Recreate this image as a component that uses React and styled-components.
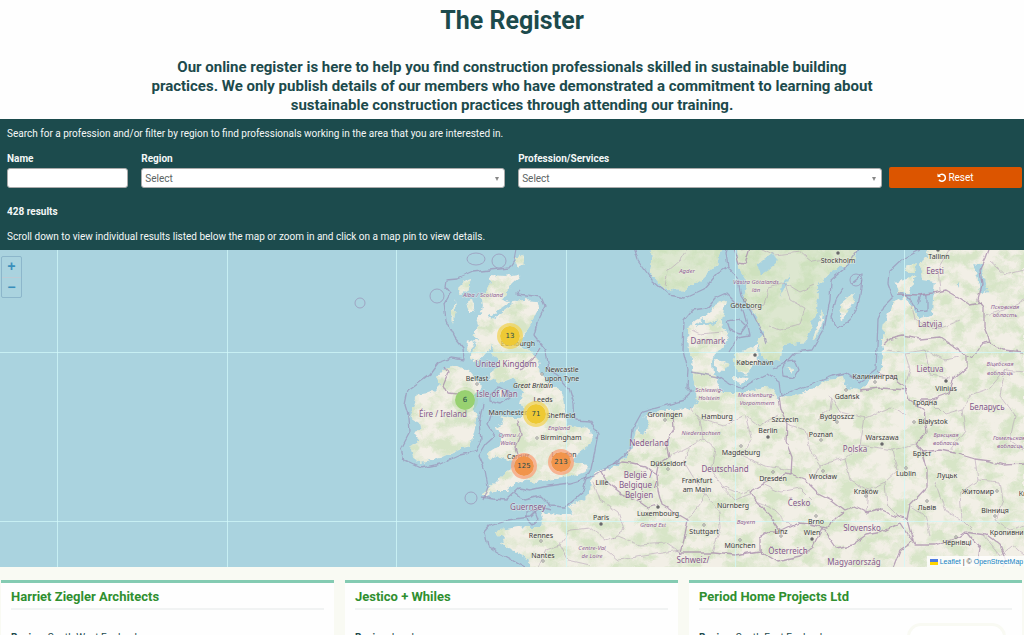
import React from "react";
import styled, { createGlobalStyle } from "styled-components";

const GlobalStyle = createGlobalStyle`
  * { box-sizing: border-box; }
  body {
    margin: 0;
    background: #f9faf3;
    color: #1c4a4c;
    font-family: Roboto, "Liberation Sans", sans-serif;
    font-size: 10px;
    overflow-x: hidden;
  }
`;

const Intro = styled.header`
  background: #fefefe;
  padding: 6px 16px 4px;
  text-align: center;
`;

const PageTitle = styled.h1`
  margin: 0 0 22px;
  font-size: 25px;
  line-height: 30px;
  font-weight: 700;
`;

const Lead = styled.p`
  max-width: 728px;
  margin: 0 auto;
  font-size: 15px;
  line-height: 19px;
  font-weight: 700;
`;

const FilterPanel = styled.form`
  display: flex;
  flex-direction: column;
  gap: 12px;
  padding: 8px 2px 7px 7px;
  background: #1c4b4d;
  color: #f4f7f7;
`;

const Note = styled.p`
  margin: 0;
  line-height: 13px;
`;

const ResultCount = styled(Note)`
  margin-top: 5px;
  font-weight: 700;
`;

const FilterRow = styled.div`
  display: flex;
  align-items: flex-end;
  gap: 7px;
`;

const Fields = styled.div`
  display: grid;
  grid-template-columns: 1fr 3fr 3fr;
  gap: 13px;
  flex: 1;
`;

const Field = styled.label`
  display: flex;
  flex-direction: column;
  gap: 3px;
  min-width: 0;
  line-height: 13px;
  font-weight: 700;
`;

const TextBox = styled.input`
  width: 100%;
  height: 20px;
  padding: 0 4px;
  border: 1px solid #aaa;
  border-radius: 3px;
  background: #fff;
  font: inherit;
  font-weight: 400;
`;

const SelectWrap = styled.span`
  position: relative;
  display: block;

  &::after {
    content: "";
    position: absolute;
    right: 6px;
    top: 9px;
    border: 2px solid transparent;
    border-top: 4px solid #888;
    border-bottom: 0;
    pointer-events: none;
  }
`;

const SelectBox = styled.select`
  display: block;
  width: 100%;
  height: 20px;
  padding: 0 3px;
  appearance: none;
  border: 1px solid #aaa;
  border-radius: 3px;
  background: #fff;
  color: #5c6464;
  font: inherit;
  font-weight: 400;
`;

const ResetButton = styled.button`
  display: flex;
  align-items: center;
  justify-content: center;
  gap: 2px;
  width: 133px;
  height: 21px;
  padding: 0;
  border: 0;
  border-radius: 2px;
  background: #dc5500;
  color: #fff;
  font: inherit;
`;

const MapArea = styled.section`
  position: relative;
  aspect-ratio: 1024 / 317;
  overflow: hidden;
  background: #aad3df;
`;

const MapDrawing = styled.svg`
  display: block;
  width: 100%;
  height: 100%;
  font-family: "Noto Sans", sans-serif;
`;

const ZoomControl = styled.div`
  position: absolute;
  top: 6px;
  left: 1px;
  border: 1px solid #8cb6cb;
  border-radius: 2px;
`;

const ZoomButton = styled.button`
  display: block;
  width: 19px;
  height: 20px;
  padding: 0;
  border: 0;
  background: transparent;
  color: #398fbb;
  font: 700 14px/18px "Liberation Mono", monospace;

  & + & {
    border-top: 1px solid #bccbd5;
  }
`;

const clusterTones = {
  small: ["rgba(150, 212, 110, 0.2)", "#98d171"],
  medium: ["rgba(241, 211, 87, 0.75)", "#eec934"],
  large: ["rgba(250, 160, 120, 0.75)", "#f1944b"],
};

const Cluster = styled.button`
  position: absolute;
  left: ${(p) => (p.$x / 1024) * 100}%;
  top: ${(p) => ((p.$y - 250) / 317) * 100}%;
  width: 26px;
  height: 26px;
  padding: 0;
  transform: translate(-50%, -50%);
  border: 3px solid ${(p) => clusterTones[p.$tone][0]};
  border-radius: 50%;
  background: ${(p) => clusterTones[p.$tone][1]};
  background-clip: padding-box;
  color: #1c4a4c;
  font: 7px/20px "DejaVu Sans", sans-serif;
`;

const Attribution = styled.div`
  position: absolute;
  left: 90.5%;
  bottom: 0;
  display: flex;
  align-items: center;
  gap: 2px;
  padding: 0 3px;
  background: rgba(255, 255, 255, 0.8);
  color: #333;
  font: 7px/11px "Liberation Sans", sans-serif;
  white-space: nowrap;
`;

const MapLink = styled.a`
  color: #1484c4;
  text-decoration: none;
`;

const Results = styled.main`
  display: grid;
  grid-template-columns: repeat(3, 1fr);
  gap: 11px;
  padding: 13px 2px 0 1px;
`;

const Card = styled.article`
  padding: 6px 10px 10px;
  border-top: 3px solid #84cbb2;
  background: #fefefe;
`;

const CardTitle = styled.h2`
  margin: 0 0 20px;
  padding-bottom: 3px;
  border-bottom: 2px solid #f1f3f3;
  color: #2f8f2f;
  font-size: 13px;
  line-height: 16px;
  font-weight: 700;
`;

const CardBody = styled.div`
  display: flex;
  justify-content: space-between;
  align-items: flex-start;
`;

const Detail = styled.p`
  margin: 1px 0 0;
  line-height: 14px;
`;

const LogoFrame = styled.div`
  width: 99px;
  height: 40px;
  margin: -7px 6px 0 0;
  border: 3px solid #f9faf3;
  border-radius: 14px;
  background: #fff;
`;

const graticuleX = [57, 227, 396, 566, 735, 904];
const graticuleY = [352, 521];

const coasts = [
  // Great Britain
  "490,275 505,276 518,274 520,277 513,283 508,292 502,300 507,302 523,300 537,301 539,305 535,317 528,328 523,337 518,342 507,343 522,347 532,352 538,360 540,372 547,382 557,388 563,395 565,405 564,417 567,425 577,427 590,428 593,437 587,448 577,455 572,462 588,465 587,471 577,475 563,478 547,480 537,482 523,480 513,485 507,490 497,490 485,497 481,495 493,485 503,475 510,468 520,467 523,462 510,460 500,457 490,458 487,453 500,445 505,435 495,430 503,422 500,416 510,418 522,418 523,410 520,403 523,392 513,378 500,383 490,378 488,373 497,368 497,358 492,355 493,345 487,352 478,362 470,360 473,348 478,338 472,335 480,325 477,317 483,308 482,298 487,288 492,283",
  "472,278 466,280 458,288 461,294 469,289",
  "466,303 472,300 475,310 470,313",
  "455,300 456,310 453,324 452,313",
  "517,258 522,254 524,262 518,268 515,262",
  "468,340 475,342 467,353",
  // Ireland
  "457,365 468,370 478,382 482,387 475,395 473,405 477,420 473,437 470,447 457,450 440,458 422,463 413,457 410,447 420,440 415,435 422,425 410,417 413,407 417,395 433,392 440,385 437,378 445,368",
  "499,393 503,388 505,392 501,397",
  // Continental Europe
  "500,530 517,527 527,528 542,528 543,520 540,512 550,513 563,515 573,512 567,507 583,500 590,493 591,480 597,472 610,468 617,466 627,457 633,443 637,427 643,417 663,410 677,410 692,408 698,402 697,392 693,378 692,368 693,358 689,352 688,328 697,320 710,313 715,305 725,300 723,315 720,328 730,333 727,342 717,352 712,362 713,373 717,382 722,392 737,392 750,392 763,387 773,388 777,398 790,397 807,392 827,380 843,378 847,388 860,390 870,380 879,377 882,368 883,355 882,338 885,322 892,303 905,297 913,307 920,318 932,315 933,298 935,282 922,280 920,265 927,255 933,244 1030,244 1030,575 532,575 528,558 517,552 500,545 505,538 495,533",
  "733,355 745,350 757,345 758,362 747,375 736,371",
  "714,360 728,362 725,372 717,371",
  "733,377 748,378 742,383 734,381",
  "787,366 793,369 791,373",
  // Norway and Sweden
  "650,244 652,260 650,273 663,287 680,291 700,282 717,265 722,244",
  "737,244 738,268 747,282 743,298 757,318 763,332 757,342 763,358 780,362 783,345 807,342 813,318 817,312 818,285 830,272 853,262 860,244",
  "840,305 855,292 853,300 842,322",
  "813,338 823,310 822,322 815,339",
  "895,283 918,275 908,293 898,293",
  "905,268 917,264 914,272 907,272",
];

const lakes = [
  "973,263 983,265 984,279 988,292 982,295 978,280",
  "757,265 773,252 777,262 768,270 760,275",
  "790,275 786,286 780,297 782,285",
  "638,421 645,416 648,425 643,434 639,431",
  "957,281 959,284 957,288",
];

const seaBorders = [
  "517,244 514,260 509,268 490,270 473,272 457,279 446,280 445,286 450,292 444,303 446,320 455,338 463,348 464,360 452,358 438,363 430,374 419,382 408,390 405,405 409,418 410,432 401,449 404,460 421,468 440,464 460,455 476,451 481,440 479,423 483,405",
  "520,290 516,294 526,295 541,297 545,306 538,320 534,335 546,350 549,370 560,378 569,388 574,404 575,420 590,421 598,434 594,455 591,469 586,478 583,492 566,507 551,506 541,496 525,500 515,493",
  "483,500 488,487 485,470 479,456 486,444 495,436 488,425 492,412",
  "481,497 493,499 506,500 519,488 530,490 548,486 570,483 591,477 602,470 613,465",
  "552,510 540,507 530,517 508,520 490,526 485,532 488,546 499,553 517,563 528,569",
  "613,465 630,450 632,430 642,412 663,406 684,400 692,392 687,387 688,370 683,350 684,320 692,310 707,308 715,298 726,293 734,301 745,313 750,335 738,337 729,352",
  "633,244 638,260 652,280 669,295 685,298 704,289 717,274 728,267 737,277 741,296 753,315 763,335 766,344",
  "728,267 726,253 729,244",
  "692,372 718,377 728,384 742,388 757,379 767,374 779,382 781,396 794,390 812,384 833,376 846,373 859,383 876,370 877,346 878,319 884,306 893,297 888,283 889,272 903,259 920,250",
  "860,247 844,269 831,280 830,300 824,329 812,350 795,352 785,363 773,369",
  "905,294 913,303 918,312 927,311 927,295 921,295 918,303",
  "850,284 862,274 861,288 858,306 848,323 837,328 831,318 836,300 843,289",
  "787,361 795,360 799,370 794,378 784,376 783,369 787,361",
  "727,321 739,319 746,326 741,333 730,330 727,321",
  "490,395 500,386 509,391 510,398 501,404 490,401 490,395",
  "527,512 535,511 538,519 532,524 527,519 527,512",
];

const landBorders = [
  "445,366 449,373 444,385 448,393 457,394 462,392 470,398",
  "520,370 535,356 540,348",
  "518,420 521,435 516,447 520,460",
  "613,465 622,462 631,463 645,466 657,474 658,490 662,505 674,512 688,520 685,535 680,553",
  "600,470 607,482 622,494 637,500 648,508 658,505",
  "673,412 674,430 666,443 669,457 658,465 656,475",
  "680,553 700,553 713,553 735,555 760,551 760,538 772,531 781,531 771,517 756,502 750,492 765,483 785,474 791,475 792,457 786,442 787,424 781,410 779,396",
  "791,474 804,479 818,493 832,500 845,510 855,506 867,512 879,509 890,514 907,520 910,505 927,487 927,470 921,450 916,444 927,432 924,410 909,400 905,386 893,377 877,372",
  "781,531 798,523 810,524 826,528 836,518 844,512",
  "760,551 778,562 800,557 812,548 822,528 836,548 852,545 866,535 882,532 901,523",
  "860,390 880,388 908,390",
  "884,345 890,339 903,336 920,339 940,337 952,345 966,355 973,358 983,343 990,342 984,327 984,307 978,300 982,285 980,270 986,258 991,244",
  "898,294 920,295 933,293 946,290 960,298 970,305 982,303",
  "990,342 1003,350 1024,352",
  "966,355 966,368 954,378 949,393 930,400 920,400",
  "921,452 940,450 955,453 975,459 990,461 1004,465 1024,464",
  "901,523 915,545 935,545 957,538 965,532 987,535 1000,545 1006,560 1003,570",
  "967,532 980,548 976,570",
  "907,520 913,541 900,550 892,570",
  "732,244 738,263 745,264 750,248",
];

const regionBorders = [
  "535,575 546,550 560,545 570,530 590,528 605,540 618,536 640,545 666,543 684,555",
  "593,480 600,500 618,512 624,530 613,538",
  "600,545 618,560 650,555 680,550",
  "560,545 568,560 590,565",
  "690,407 700,420 703,438 690,446 672,455",
  "703,438 716,450 712,470 722,486 740,494 750,490",
  "700,418 724,425 745,415 760,425 778,415",
  "745,415 752,440 740,455 765,466 792,470",
  "690,446 684,462 695,480 706,495 693,512 686,520",
  "706,495 719,512 720,528 712,553",
  "722,486 735,500 750,494",
  "692,330 700,334 722,332",
  "762,484 780,492 800,488 812,500",
  "756,502 775,510 790,526 800,523",
  "787,424 805,430 810,450 820,465 815,480",
  "830,395 840,412 865,418 890,408 907,415",
  "820,465 845,458 860,445 893,450 915,444",
  "865,418 860,445",
  "845,458 850,480 868,490 885,482 898,470 893,450",
  "868,490 866,512",
  "885,482 887,505 900,518",
  "818,420 830,410 832,396",
  "887,350 905,353 925,350 945,360 960,357",
  "905,353 910,370 905,386",
  "925,350 930,375 950,378",
  "930,400 945,415 962,410 970,395 990,388 1005,370 1024,372",
  "962,410 965,430 950,450",
  "1005,370 1000,395 1015,415 1010,440 1024,450",
  "985,315 1005,310 1024,300",
  "990,262 1005,275 1024,270",
  "975,459 978,480 960,493 962,520 972,530",
  "978,480 1000,482 1003,500 995,520 1010,530 1024,525",
  "935,482 945,510 960,520",
  "910,505 925,515 930,535",
  "750,310 764,306 768,288 785,283 800,292 815,285",
  "768,325 780,330 800,325 805,308 790,300 785,283",
  "740,250 760,248 775,255 800,252 812,262 840,258",
  "665,285 668,270 680,260 690,244",
  "910,297 915,320 935,330 960,320",
  "940,290 938,270 950,250",
  "984,535 1000,555 1012,545 1024,555",
];

const seaCircles = [
  [360, 303, 5],
  [437, 296, 7],
  [471, 498, 6],
  [856, 280, 6],
  [499, 261, 7],
];

const countries = [
  ["United Kingdom", 506, 367], ["Isle of Man", 497, 397], ["Éire / Ireland", 443, 417],
  ["Guernsey", 528, 510], ["Danmark", 708, 344], ["Eesti", 935, 274], ["Latvija", 930, 327],
  ["Lietuva", 930, 372], ["Беларусь", 987, 410], ["Nederland", 649, 446],
  ["België /", 638, 478], ["Belgique /", 638, 488], ["Belgien", 639, 498],
  ["Deutschland", 725, 472], ["Česko", 799, 506], ["Polska", 855, 452],
  ["Slovensko", 862, 531], ["Österreich", 788, 554], ["Magyarország", 854, 565],
  ["Schweiz/", 693, 563],
];

const regions = [
  ["Alba / Scotland", 483, 297], ["England", 559, 430], ["Cymru /", 509, 437],
  ["Wales", 508, 445], ["Agder", 687, 273], ["Västra Götalands", 756, 284],
  ["län", 756, 292], ["Schleswig-", 709, 392], ["Holstein", 709, 400],
  ["Mecklenburg-", 756, 397], ["Vorpommern", 757, 405], ["Niedersachsen", 701, 435],
  ["Grand Est", 653, 527], ["Bayern", 746, 524], ["Centre-Val", 592, 550],
  ["de Loire", 592, 558], ["Псковская", 1005, 309], ["область", 1005, 317],
  ["Віцебская", 1000, 366], ["вобласць", 1000, 375], ["Брэсцкая", 946, 437],
  ["вобласць", 946, 445], ["Гомельская", 1009, 440], ["вобласць", 1010, 448],
];

const cities = [
  ["Edinburgh", 518, 346], ["Newcastle", 562, 372], ["upon Tyne", 562, 381],
  ["Belfast", 477, 381], ["Leeds", 543, 402], ["Manchester", 508, 415],
  ["Sheffield", 561, 418], ["Birmingham", 561, 440], ["Cardiff", 518, 459],
  ["London", 564, 457], ["Rennes", 541, 538], ["Nantes", 543, 558], ["Paris", 601, 520],
  ["Lille", 602, 485], ["Göteborg", 746, 308], ["København", 755, 365],
  ["Stockholm", 838, 263], ["Tallinn", 939, 259], ["Groningen", 665, 417],
  ["Hamburg", 717, 419], ["Berlin", 768, 433], ["Szczecin", 785, 422],
  ["Magdeburg", 741, 455], ["Düsseldorf", 668, 466], ["Frankfurt", 697, 483],
  ["am Main", 697, 492], ["Luxembourg", 658, 516], ["Nürnberg", 733, 508],
  ["Stuttgart", 704, 534], ["München", 740, 548], ["Dresden", 773, 481],
  ["Linz", 781, 534], ["Wien", 812, 535], ["Brno", 816, 524], ["Wrocław", 823, 479],
  ["Poznań", 821, 437], ["Bydgoszcz", 837, 419], ["Warszawa", 882, 440],
  ["Gdańsk", 847, 399], ["Калининград", 875, 379], ["Vilnius", 946, 391],
  ["Гродна", 925, 405], ["Białystok", 933, 424], ["Брэст", 922, 456],
  ["Lublin", 906, 476], ["Луцьк", 947, 478], ["Kraków", 866, 494],
  ["Житомир", 978, 494], ["Львів", 927, 510], ["Вінниця", 995, 513],
  ["Київ", 1026, 496], ["Чернівці", 957, 545], ["Кропивницький", 1017, 535],
];

const towns = [
  [542, 374], [477, 384], [537, 438], [541, 541], [543, 561], [745, 300], [665, 420],
  [741, 446], [704, 525], [740, 540], [781, 536], [773, 472], [846, 390], [875, 382],
  [914, 422], [906, 468], [866, 496], [997, 491], [927, 501], [995, 516], [956, 537],
  [821, 440], [823, 471], [816, 516], [837, 422], [668, 469],
];
const capitals = [[601, 524], [755, 355], [838, 253], [768, 437], [658, 507], [882, 444], [946, 381], [812, 539], [938, 250]];

const clusters = [
  [13, 510, 336, "medium"],
  [6, 465, 400, "small"],
  [71, 536, 414, "medium"],
  [125, 524, 466, "large"],
  [213, 561, 462, "large"],
];

const cards = [
  { name: "Harriet Ziegler Architects", region: "South West England" },
  { name: "Jestico + Whiles", region: "London" },
  { name: "Period Home Projects Ltd", region: "South East England", logo: true },
];

function Lines({ shapes, ...rest }) {
  return (
    <g fill="none" strokeLinejoin="round" {...rest}>
      {shapes.map((points, i) => <polyline key={i} points={points} />)}
    </g>
  );
}

function Labels({ items, ...rest }) {
  return (
    <g textAnchor="middle" stroke="#f4f2ea" strokeWidth="1" strokeOpacity="0.6" paintOrder="stroke" {...rest}>
      {items.map(([text, x, y]) => <text key={`${text}${y}`} x={x} y={y}>{text}</text>)}
    </g>
  );
}

function EuropeMap() {
  return (
    <MapDrawing viewBox="0 250 1024 317" role="img" aria-label="Map of northern Europe">
      <defs>
        <filter id="rough" x="0" y="240" width="1024" height="340" filterUnits="userSpaceOnUse">
          <feTurbulence type="fractalNoise" baseFrequency="0.16" numOctaves="3" seed="4" />
          <feDisplacementMap in="SourceGraphic" scale="7" xChannelSelector="R" yChannelSelector="G" />
        </filter>
        <filter id="wobble" x="0" y="240" width="1024" height="340" filterUnits="userSpaceOnUse">
          <feTurbulence type="fractalNoise" baseFrequency="0.1" numOctaves="2" seed="9" />
          <feDisplacementMap in="SourceGraphic" scale="5" xChannelSelector="R" yChannelSelector="G" />
        </filter>
        <filter id="woods" x="0" y="240" width="1024" height="340" filterUnits="userSpaceOnUse" colorInterpolationFilters="sRGB">
          <feTurbulence type="fractalNoise" baseFrequency="0.055 0.075" numOctaves="5" seed="12" />
          <feColorMatrix values="0 0 0 0 0.77  0 0 0 0 0.87  0 0 0 0 0.7  3.4 0 0 0 -1.35" />
          <feComposite in2="SourceGraphic" operator="in" />
        </filter>
      </defs>
      <rect y="240" width="1024" height="340" fill="#aad3df" />
      <g filter="url(#rough)">
        <g fill="#f2efe6">
          {coasts.map((points, i) => <polygon key={i} points={points} />)}
        </g>
        <g fill="#b8dba8" opacity="0.35">
          <polygon points={coasts[coasts.length - 5]} />
          <polygon points={coasts[coasts.length - 6]} />
        </g>
        <g filter="url(#woods)" opacity="0.58">
          {coasts.map((points, i) => <polygon key={i} points={points} />)}
        </g>
        <g fill="#aad3df">
          {lakes.map((points, i) => <polygon key={i} points={points} />)}
          <path d="M695 325l8-6 6 4 9-3-4 4-6 2-5-2-5 3zM512 300l-24 18 3 2 20-14z" />
        </g>
      </g>
      <Lines shapes={seaBorders} stroke="#9a92b7" strokeWidth="1.3" strokeOpacity="0.7" filter="url(#wobble)" />
      <g fill="none" stroke="#9a92b7" strokeOpacity="0.7">
        {seaCircles.map(([x, y, r]) => <circle key={x} cx={x} cy={y} r={r} />)}
        <ellipse cx="476" cy="259" rx="9" ry="6" />
      </g>
      <Lines shapes={regionBorders} stroke="#b29bb6" strokeWidth="1" strokeOpacity="0.5" filter="url(#wobble)" />
      <Lines shapes={landBorders} stroke="#a78bab" strokeWidth="1.3" strokeOpacity="0.75" filter="url(#wobble)" />
      <g stroke="#d0f8fa" strokeOpacity="0.75" strokeWidth="1">
        {graticuleX.map((x) => <line key={x} x1={x + 0.5} x2={x + 0.5} y1="250" y2="567" />)}
        {graticuleY.map((y) => <line key={y} x1="0" x2="1024" y1={y + 0.5} y2={y + 0.5} />)}
      </g>
      <g fill="#e8e6e1" stroke="#777" strokeWidth="0.6">
        {towns.map(([x, y]) => <circle key={x + y / 1000} cx={x} cy={y} r="1.3" />)}
      </g>
      <g fill="#555" stroke="#999">
        {capitals.map(([x, y]) => <circle key={x} cx={x} cy={y} r="1.5" />)}
      </g>
      <Labels items={regions} fill="#8f6395" fontSize="6" fontStyle="italic" />
      <Labels items={cities} fill="#3a3a3a" fontSize="7" />
      <Labels items={countries} fill="#83588a" fontSize="8" />
      <Labels items={[["Great Britain", 533, 388]]} fill="#333" fontSize="7" fontStyle="italic" />
    </MapDrawing>
  );
}

function UndoIcon() {
  return (
    <svg width="9" height="9" viewBox="0 0 18 18" fill="none" stroke="currentColor" strokeWidth="3" aria-hidden="true">
      <path d="M3.5 6.5A7 7 0 1 1 4 13.5" />
      <path d="M1 1v7h7z" fill="currentColor" stroke="none" />
    </svg>
  );
}

function SelectField({ label }) {
  return (
    <Field>
      {label}
      <SelectWrap>
        <SelectBox defaultValue="">
          <option value="">Select</option>
        </SelectBox>
      </SelectWrap>
    </Field>
  );
}

export default function App() {
  return (
    <>
      <GlobalStyle />
      <Intro>
        <PageTitle>The Register</PageTitle>
        <Lead>
          Our online register is here to help you find construction professionals skilled in sustainable building
          practices. We only publish details of our members who have demonstrated a commitment to learning about
          sustainable construction practices through attending our training.
        </Lead>
      </Intro>
      <FilterPanel>
        <Note>Search for a profession and/or filter by region to find professionals working in the area that you are interested in.</Note>
        <FilterRow>
          <Fields>
            <Field>
              Name
              <TextBox type="text" />
            </Field>
            <SelectField label="Region" />
            <SelectField label="Profession/Services" />
          </Fields>
          <ResetButton type="reset">
            <UndoIcon />
            Reset
          </ResetButton>
        </FilterRow>
        <ResultCount>428 results</ResultCount>
        <Note>Scroll down to view individual results listed below the map or zoom in and click on a map pin to view details.</Note>
      </FilterPanel>
      <MapArea>
        <EuropeMap />
        {clusters.map(([count, x, y, tone]) => (
          <Cluster key={count} type="button" $x={x} $y={y} $tone={tone}>{count}</Cluster>
        ))}
        <ZoomControl>
          <ZoomButton type="button" aria-label="Zoom in">+</ZoomButton>
          <ZoomButton type="button" aria-label="Zoom out">−</ZoomButton>
        </ZoomControl>
        <Attribution>
          <svg width="8" height="6" viewBox="0 0 8 6" aria-hidden="true">
            <rect width="8" height="3" fill="#4c7be1" />
            <rect y="3" width="8" height="3" fill="#ffd500" />
          </svg>
          <MapLink href="#leaflet">Leaflet</MapLink>
          <span>|</span>
          <span>©</span>
          <MapLink href="#openstreetmap">OpenStreetMap</MapLink>
        </Attribution>
      </MapArea>
      <Results>
        {cards.map(({ name, region, logo }) => (
          <Card key={name}>
            <CardTitle>{name}</CardTitle>
            <CardBody>
              <Detail><strong>Region:</strong> {region}</Detail>
              {logo && <LogoFrame />}
            </CardBody>
          </Card>
        ))}
      </Results>
    </>
  );
}
